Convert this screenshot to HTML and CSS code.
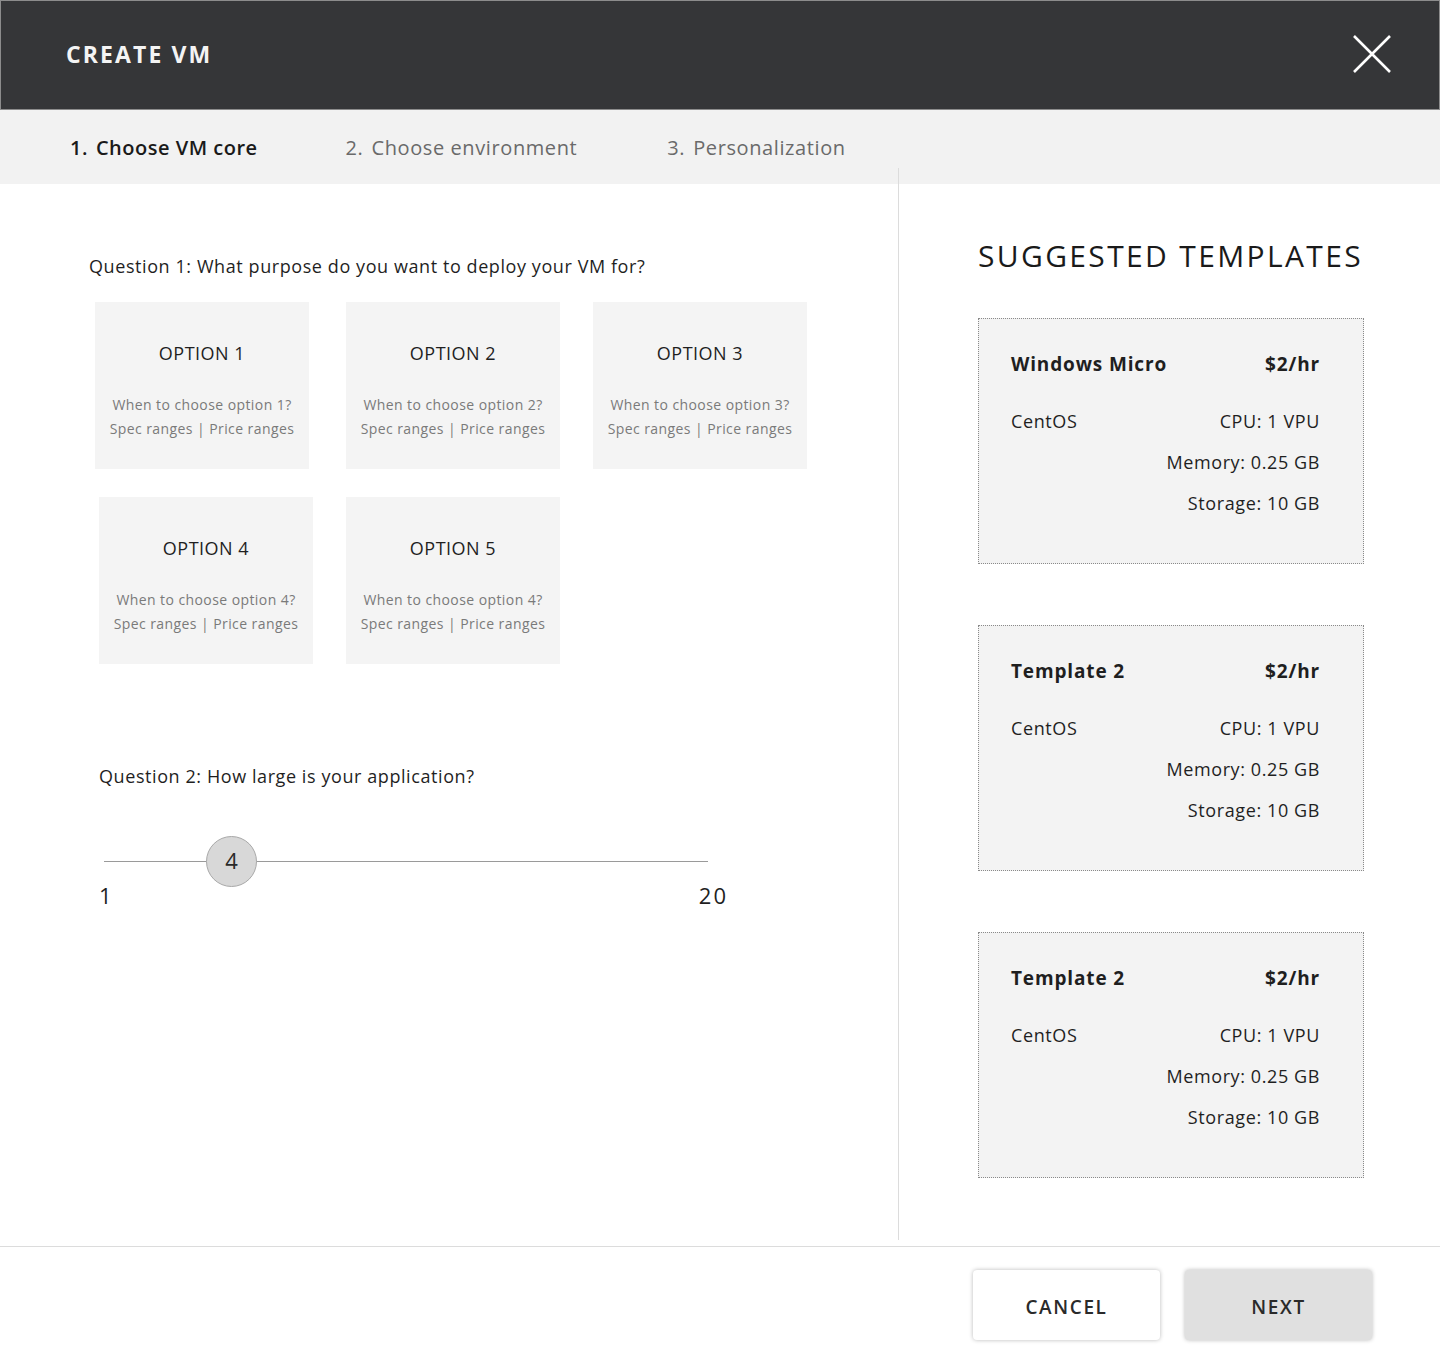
FILE: index.html
```html
<!DOCTYPE html>
<html lang="en">
<head>
<meta charset="utf-8">
<title>Create VM</title>
<link rel="stylesheet" href="styles.css">
</head>
<body>
<div class="page">
  <header class="header">
    <h1 class="title">CREATE VM</h1>
    <button class="close" aria-label="Close">
      <svg width="38" height="38" viewBox="0 0 38 38"><path d="M1 1 L37 37 M37 1 L1 37" stroke="#fff" stroke-width="2.6" fill="none"/></svg>
    </button>
  </header>
  <nav class="steps">
    <span class="step active"><span class="num">1.</span>Choose VM core</span>
    <span class="step step2"><span class="num">2.</span>Choose environment</span>
    <span class="step step3"><span class="num">3.</span>Personalization</span>
  </nav>
  <main class="main">
    <section class="left">
      <p class="question q1">Question 1: What purpose do you want to deploy your VM for?</p>
      <div class="options">
        <div class="option">
          <div class="opt-title">OPTION 1</div>
          <div class="opt-sub">When to choose option 1?</div>
          <div class="opt-sub">Spec ranges | Price ranges</div>
        </div>
        <div class="option">
          <div class="opt-title">OPTION 2</div>
          <div class="opt-sub">When to choose option 2?</div>
          <div class="opt-sub">Spec ranges | Price ranges</div>
        </div>
        <div class="option">
          <div class="opt-title">OPTION 3</div>
          <div class="opt-sub">When to choose option 3?</div>
          <div class="opt-sub">Spec ranges | Price ranges</div>
        </div>
        <div class="option shift">
          <div class="opt-title">OPTION 4</div>
          <div class="opt-sub">When to choose option 4?</div>
          <div class="opt-sub">Spec ranges | Price ranges</div>
        </div>
        <div class="option">
          <div class="opt-title">OPTION 5</div>
          <div class="opt-sub">When to choose option 4?</div>
          <div class="opt-sub">Spec ranges | Price ranges</div>
        </div>
      </div>
      <p class="question q2">Question 2: How large is your application?</p>
      <div class="slider">
        <div class="track">
          <div class="thumb" style="left: 127px;">4</div>
        </div>
        <div class="range-labels"><span>1</span><span>20</span></div>
      </div>
    </section>
    <aside class="right">
      <h2 class="sugg">SUGGESTED TEMPLATES</h2>
      <div class="template">
        <div class="t-row t-head"><span>Windows Micro</span><span>$2/hr</span></div>
        <div class="t-row"><span>CentOS</span><span>CPU: 1 VPU</span></div>
        <div class="t-row t-end">Memory: 0.25 GB</div>
        <div class="t-row t-end">Storage: 10 GB</div>
      </div>
      <div class="template">
        <div class="t-row t-head"><span>Template 2</span><span>$2/hr</span></div>
        <div class="t-row"><span>CentOS</span><span>CPU: 1 VPU</span></div>
        <div class="t-row t-end">Memory: 0.25 GB</div>
        <div class="t-row t-end">Storage: 10 GB</div>
      </div>
      <div class="template">
        <div class="t-row t-head"><span>Template 2</span><span>$2/hr</span></div>
        <div class="t-row"><span>CentOS</span><span>CPU: 1 VPU</span></div>
        <div class="t-row t-end">Memory: 0.25 GB</div>
        <div class="t-row t-end">Storage: 10 GB</div>
      </div>
    </aside>
  </main>
  <footer class="footer">
    <button class="btn btn-cancel">CANCEL</button>
    <button class="btn btn-next">NEXT</button>
  </footer>
</div>
</body>
</html>
```

FILE: styles.css
```css
* { box-sizing: border-box; }
html, body { margin: 0; padding: 0; }
body {
  font-family: "Open Sans", "Liberation Sans", sans-serif;
  color: #1f1f1f;
  background: #fff;
}
.page {
  width: 1440px;
  height: 1364px;
  display: flex;
  flex-direction: column;
}
.header {
  height: 110px;
  background: #353638;
  border: 1px solid #8c8c8c;
  display: flex;
  align-items: center;
  justify-content: space-between;
  padding: 0 48px 3px 65px;
}
.title {
  margin: 0;
  color: #f4f4f4;
  font-size: 23px;
  font-weight: 700;
  letter-spacing: 2.1px;
}
.close {
  border: 0;
  background: none;
  padding: 0;
  width: 38px;
  height: 38px;
  display: block;
}
.close svg { display: block; }
.steps {
  height: 74px;
  background: #f2f2f2;
  display: flex;
  align-items: center;
  padding-left: 70px;
  font-size: 20px;
  letter-spacing: 0.6px;
  color: #6a6a6a;
}
.step .num { margin-right: 8px; }
.step.active { color: #1a1a1a; font-weight: 600; letter-spacing: 0.5px; }
.step2 { margin-left: 88px; }
.step3 { margin-left: 90px; }
.main {
  flex: 1;
  display: flex;
}
.left {
  width: 898px;
  padding: 70px 0 0 89px;
}
.question {
  margin: 0;
  font-size: 18px;
  line-height: 24px;
  letter-spacing: 0.58px;
  color: #1f1f1f;
}
.options {
  margin-top: 24px;
  margin-left: 6px;
  display: grid;
  grid-template-columns: 251px 247px 214px;
  row-gap: 28px;
}
.option {
  width: 214px;
  height: 167px;
  background: #f4f4f4;
  text-align: center;
  padding-top: 39px;
}
.option.shift { margin-left: 4px; }
.opt-title {
  font-size: 18px;
  line-height: 24px;
  letter-spacing: 0.5px;
  color: #1f1f1f;
  margin-bottom: 28px;
}
.opt-sub {
  font-size: 14px;
  line-height: 24px;
  letter-spacing: 0.42px;
  color: #7a7a7a;
}
.q2 {
  margin-top: 100px;
  margin-left: 10px;
}
.slider {
  margin-top: 73px;
  margin-left: 10px;
  width: 629px;
}
.track {
  position: relative;
  margin-left: 5px;
  width: 604px;
  height: 1px;
  background: #9a9a9a;
}
.thumb {
  position: absolute;
  top: -25px;
  width: 51px;
  height: 51px;
  margin-left: -25px;
  border-radius: 50%;
  background: #d8d8d8;
  border: 1px solid #a8a8a8;
  font-size: 22px;
  line-height: 47px;
  text-align: center;
  color: #2a2a2a;
}
.range-labels {
  display: flex;
  justify-content: space-between;
  margin-top: 20px;
  font-size: 22px;
  line-height: 26px;
  letter-spacing: 2px;
  color: #1f1f1f;
}
.right {
  flex: 1;
  border-left: 1px solid #dcdcdc;
  padding: 54px 0 0 80px;
  margin-bottom: 6px;
  position: relative;
}
.right::before {
  content: "";
  position: absolute;
  left: -1px;
  top: -16px;
  height: 16px;
  width: 1px;
  background: #dcdcdc;
}
.sugg {
  margin: 0 0 44px -1px;
  font-size: 30px;
  font-weight: 400;
  letter-spacing: 2.35px;
  line-height: 36px;
  color: #1a1a1a;
}
.template {
  width: 386px;
  height: 246px;
  margin-left: -1px;
  background: #f3f3f3;
  border: 1px dotted #8a8a8a;
  padding: 32px 43px 0 32px;
  margin-bottom: 61px;
}
.t-row {
  display: flex;
  justify-content: space-between;
  font-size: 18px;
  line-height: 26px;
  letter-spacing: 0.6px;
  margin-bottom: 15px;
  color: #1f1f1f;
}
.t-head {
  font-size: 19px;
  font-weight: 700;
  letter-spacing: 0.85px;
  margin-bottom: 31px;
}
.t-end { justify-content: flex-end; }
.footer {
  height: 118px;
  border-top: 1px solid #dcdcdc;
  display: flex;
  justify-content: flex-end;
  align-items: flex-start;
  padding: 23px 68px 0 0;
  gap: 25px;
}
.btn {
  width: 187px;
  height: 70px;
  border: 0;
  border-radius: 4px;
  padding-top: 5px;
  font-family: inherit;
  font-size: 19px;
  font-weight: 600;
  letter-spacing: 1.6px;
  color: #2a2a2a;
  box-shadow: 0 0 4px rgba(0,0,0,0.28);
}
.btn-cancel { background: #fff; }
.btn-next { background: #e0e0e0; }
```
